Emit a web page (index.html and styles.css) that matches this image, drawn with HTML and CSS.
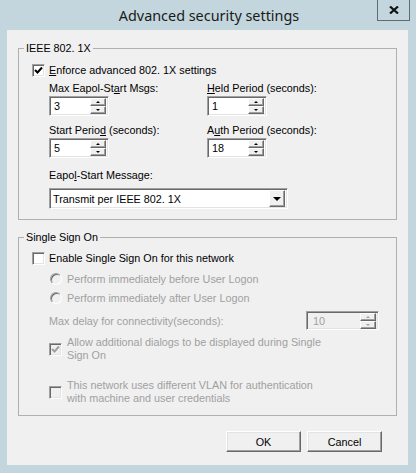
FILE: index.html
```html
<!DOCTYPE html>
<html>
<head>
<meta charset="utf-8">
<link rel="stylesheet" href="styles.css">
</head>
<body>
<div class="window">
  <div class="titlebar">
    <span class="title">Advanced security settings</span>
    <button class="close"><svg width="10" height="8" viewBox="0 0 10 8"><path d="M1 0.5 L9 7.5 M9 0.5 L1 7.5" stroke="#111" stroke-width="2.2"/></svg></button>
  </div>
  <div class="panel">
    <fieldset class="group g1">
      <legend>IEEE 802. 1X</legend>
      <div class="check-row">
        <span class="cb"><svg width="9" height="9" viewBox="0 0 9 9"><path d="M1 4 L3.5 6.5 L8 1.5" fill="none" stroke="#000" stroke-width="2"/></svg></span>
        <span><u>E</u>nforce advanced 802. 1X settings</span>
      </div>
      <div class="indent">
        <div class="grid2">
          <div class="field">
            <div class="lbl">Max Eapol-St<u>a</u>rt Msgs:</div>
            <div class="spin"><span class="val">3</span><span class="arrows"><span class="ab"><i class="up"></i></span><span class="ab"><i class="dn"></i></span></span></div>
          </div>
          <div class="field">
            <div class="lbl"><u>H</u>eld Period (seconds):</div>
            <div class="spin"><span class="val">1</span><span class="arrows"><span class="ab"><i class="up"></i></span><span class="ab"><i class="dn"></i></span></span></div>
          </div>
          <div class="field">
            <div class="lbl">Start Perio<u>d</u> (seconds):</div>
            <div class="spin"><span class="val">5</span><span class="arrows"><span class="ab"><i class="up"></i></span><span class="ab"><i class="dn"></i></span></span></div>
          </div>
          <div class="field">
            <div class="lbl">A<u>u</u>th Period (seconds):</div>
            <div class="spin"><span class="val">18</span><span class="arrows"><span class="ab"><i class="up"></i></span><span class="ab"><i class="dn"></i></span></span></div>
          </div>
        </div>
        <div class="lbl msg-lbl">Eapo<u>l</u>-Start Message:</div>
        <div class="combo"><span class="combo-val">Transmit per IEEE 802. 1X</span><span class="combo-btn"><i class="dn big"></i></span></div>
      </div>
    </fieldset>

    <fieldset class="group g2">
      <legend>Single Sign On</legend>
      <div class="check-row">
        <span class="cb"></span>
        <span>Enable Single Sign On for this network</span>
      </div>
      <div class="indent">
        <div class="radio-row r1 dis"><span class="rb"></span><span>Perform immediately before User Logon</span></div>
        <div class="radio-row r2 dis"><span class="rb"></span><span>Perform immediately after User Logon</span></div>
        <div class="delay-row dis">
          <span>Max delay for connectivity(seconds):</span>
          <div class="spin spin-dis"><span class="val">10</span><span class="arrows"><span class="ab"><i class="up"></i></span><span class="ab"><i class="dn"></i></span></span></div>
        </div>
        <div class="multi-row m1 dis">
          <span class="cb cb-dis"><svg width="9" height="9" viewBox="0 0 9 9"><path d="M1 4 L3.5 6.5 L8 1.5" fill="none" stroke="#a0a0a0" stroke-width="2"/></svg></span>
          <span class="multi-text">Allow additional dialogs to be displayed during Single Sign On</span>
        </div>
        <div class="multi-row m2 dis">
          <span class="cb cb-dis"></span>
          <span class="multi-text">This network uses different VLAN for authentication with machine and user credentials</span>
        </div>
      </div>
    </fieldset>

    <div class="buttons">
      <button class="btn">OK</button>
      <button class="btn">Cancel</button>
    </div>
  </div>
</div>
</body>
</html>
```

FILE: styles.css
```css
* { box-sizing: border-box; }
html, body { margin: 0; padding: 0; }
body {
  background: #c3d6dd;
  font-family: "Liberation Sans", Arial, sans-serif;
  font-size: 10.8px;
  color: #000;
}
u { text-decoration: underline; text-underline-offset: 1px; }
.window {
  width: 416px;
  height: 473px;
  display: flex;
  flex-direction: column;
}
.titlebar {
  height: 30px;
  position: relative;
  display: flex;
  align-items: center;
  justify-content: center;
}
.title {
  font-family: "Noto Sans", "Open Sans", sans-serif;
  font-size: 14.4px;
  color: #1a1a1a;
  margin-left: 2px;
  margin-top: 1px;
}
.close {
  position: absolute;
  left: 377px;
  top: 0;
  width: 33px;
  height: 21px;
  border: 1px solid #5f6b70;
  border-top: none;
  background: transparent;
  padding: 0;
  display: flex;
  align-items: center;
  justify-content: center;
}
.panel {
  margin: 0 8px 8px 7px;
  background: #f0f0f0;
  flex: 1;
  padding: 0 11px 0 11px;
  display: flex;
  flex-direction: column;
}
.group {
  margin: 0;
  border: 1px solid #b0b0b0;
  padding: 0 12px 10px 13px;
  min-width: 0;
}
.group legend {
  line-height: 13px;
  padding: 0 2px;
  margin-left: -8px;
}
.g1 { margin-top: 12px; padding-top: 8px; }
.g2 { margin-top: 11px; padding-top: 7px; }

.check-row {
  display: flex;
  align-items: center;
  height: 14px;
  gap: 4px;
}
.cb {
  width: 13px;
  height: 13px;
  flex: none;
  background: #fff;
  border: 1px solid;
  border-color: #a0a0a0 #fff #fff #a0a0a0;
  box-shadow: inset 1px 1px 0 #696969, inset -1px -1px 0 #e3e3e3;
  display: flex;
  align-items: center;
  justify-content: center;
}
.cb-dis { background: #f0f0f0; }
.indent { padding-left: 17px; }
.grid2 {
  display: grid;
  grid-template-columns: 158px 1fr;
  row-gap: 7px;
  margin-top: 4px;
}
.lbl { line-height: 14px; height: 14px; }
.spin {
  margin-top: 1px;
  width: 60px;
  height: 20px;
  background: #fff;
  border: 1px solid;
  border-color: #a0a0a0 #fff #fff #a0a0a0;
  box-shadow: inset 1px 1px 0 #696969, inset -1px -1px 0 #e3e3e3;
  display: flex;
  align-items: center;
  padding: 2px 2px 2px 4px;
}
.val { flex: 1; }
.arrows {
  width: 16px;
  height: 16px;
  display: flex;
  flex-direction: column;
}
.ab {
  flex: 1;
  background: #f0f0f0;
  border: 1px solid;
  border-color: #fff #696969 #696969 #fff;
  box-shadow: inset -1px -1px 0 #a0a0a0;
  display: flex;
  align-items: center;
  justify-content: center;
}
.up {
  width: 0; height: 0;
  border-left: 2px solid transparent;
  border-right: 2px solid transparent;
  border-bottom: 2px solid #000;
}
.dn {
  width: 0; height: 0;
  border-left: 2px solid transparent;
  border-right: 2px solid transparent;
  border-top: 2px solid #000;
}
.dn.big {
  border-left-width: 4px;
  border-right-width: 4px;
  border-top-width: 4px;
}
.msg-lbl { margin-top: 10px; }
.combo {
  margin-top: 6px;
  width: 239px;
  height: 21px;
  background: #fff;
  border: 1px solid;
  border-color: #a0a0a0 #fff #fff #a0a0a0;
  box-shadow: inset 1px 1px 0 #696969, inset -1px -1px 0 #e3e3e3;
  display: flex;
  align-items: center;
  padding: 2px 2px 2px 3px;
}
.combo-val { flex: 1; }
.combo-btn {
  width: 16px;
  height: 17px;
  background: #f0f0f0;
  border: 1px solid;
  border-color: #fff #696969 #696969 #fff;
  box-shadow: inset -1px -1px 0 #a0a0a0;
  display: flex;
  align-items: center;
  justify-content: center;
}

.dis { color: #a0a0a0; }
.radio-row {
  display: flex;
  align-items: center;
  gap: 5px;
  height: 14px;
  padding-left: 1px;
}
.r1 { margin-top: 7px; }
.r2 { margin-top: 5px; }
.rb {
  width: 12px;
  height: 12px;
  border-radius: 50%;
  background: #f0f0f0;
  border: 1px solid;
  border-color: #a0a0a0 #fff #fff #a0a0a0;
  box-shadow: inset 1px 1px 0 #696969;
}
.delay-row {
  margin-top: 6px;
  height: 19px;
  display: flex;
  align-items: center;
  justify-content: space-between;
  padding-right: 5px;
}
.spin-dis {
  width: 73px;
  height: 19px;
  margin-top: 0;
  background: #f0f0f0;
  padding-left: 6px;
}
.spin-dis .up { border-bottom-color: #a0a0a0; }
.spin-dis .dn { border-top-color: #a0a0a0; }
.multi-row {
  display: flex;
  align-items: center;
  gap: 5px;
}
.multi-text { line-height: 13px; width: 258px; }
.m1 { margin-top: 6px; }
.m2 { margin-top: 17px; }

.buttons {
  display: flex;
  justify-content: flex-end;
  gap: 6px;
  margin-top: 15px;
  padding-right: 15px;
}
.btn {
  width: 75px;
  height: 21px;
  font-family: "Liberation Sans", Arial, sans-serif;
  font-size: 10.8px;
  color: #000;
  background: #f0f0f0;
  border: 1px solid;
  border-color: #fff #696969 #696969 #fff;
  box-shadow: inset -1px -1px 0 #a0a0a0, inset 1px 1px 0 #e3e3e3;
  padding: 0;
}
```
